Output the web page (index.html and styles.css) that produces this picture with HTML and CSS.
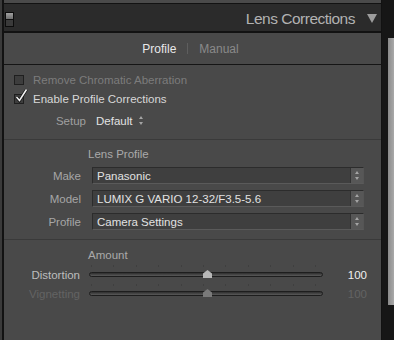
FILE: index.html
```html
<!DOCTYPE html>
<html lang="en">
<head>
  <meta charset="UTF-8">
  <meta name="viewport" content="width=device-width, initial-scale=1.0">
  <title>Lens Corrections</title>
  <link rel="stylesheet" href="styles.css">
</head>
<body>

<div class="screen">
  <div class="edge"></div>
  <div class="column">
    <div class="prev-panel"></div>

    <div class="panel-head">
      <div class="switch"><span></span></div>
      <div class="title">Lens Corrections</div>
      <div class="collapse"></div>
    </div>

    <div class="tabs">
      <span class="tab active">Profile</span>
      <span class="tab-sep"></span>
      <span class="tab">Manual</span>
    </div>

    <div class="section checks">
      <div class="check-row off">
        <span class="box"></span>
        <span>Remove Chromatic Aberration</span>
      </div>
      <div class="check-row">
        <span class="box">
          <!-- check mark sticks out of the box -->
          <svg width="13" height="15" viewBox="0 0 13 15"><path d="M1.5 9 L4.5 12.5 L11.5 1.5" fill="none" stroke="#111" stroke-width="3"/><path d="M1.5 9 L4.5 12.5 L11.5 1.5" fill="none" stroke="#f2f2f2" stroke-width="1.6"/></svg>
        </span>
        <span>Enable Profile Corrections</span>
      </div>
      <div class="setup-row">
        <span class="setup-label">Setup</span>
        <span class="setup-value">Default</span>
        <span class="updown small"></span>
      </div>
    </div>

    <div class="section lens">
      <div class="group-title">Lens Profile</div>
      <div class="field">
        <span class="field-label">Make</span>
        <div class="select"><span>Panasonic</span><b class="updown"></b></div>
      </div>
      <div class="field">
        <span class="field-label">Model</span>
        <div class="select"><span>LUMIX G VARIO 12-32/F3.5-5.6</span><b class="updown"></b></div>
      </div>
      <div class="field">
        <span class="field-label">Profile</span>
        <div class="select"><span>Camera Settings</span><b class="updown"></b></div>
      </div>
    </div>

    <div class="section amount">
      <div class="group-title">Amount</div>
      <div class="slider-row">
        <span class="slider-label">Distortion</span>
        <div class="slider"><div class="track"></div><div class="thumb"></div></div>
        <span class="slider-value">100</span>
      </div>
      <div class="slider-row disabled">
        <span class="slider-label">Vignetting</span>
        <div class="slider"><div class="track"></div><div class="thumb"></div></div>
        <span class="slider-value">100</span>
      </div>
    </div>
  </div>
  <div class="gutter">
    <div class="scroll-thumb"></div>
  </div>
</div>

</body>
</html>
```

FILE: styles.css
```css
body {
  margin: 0;
  background: #151515;
  font-family: 'Liberation Sans', Arial, sans-serif;
  font-size: 11.5px;
  overflow: hidden;
}
.screen {
  display: flex;
  width: 394px;
  height: 340px;
}
.edge {
  width: 2px;
  background: #3a3a3a;
}
.column {
  width: 377px;
  border-left: 2px solid #121212;
  border-right: 1px solid #121212;
  background: #494949;
  display: flex;
  flex-direction: column;
}
.prev-panel {
  height: 3px;
  background: #4a4a4a;
  border-bottom: 1px solid #121212;
}
.panel-head {
  height: 27px;
  background: #2b2b2b;
  border-bottom: 2px solid #121212;
  display: flex;
  align-items: center;
}
.switch {
  width: 7px;
  height: 13px;
  margin-left: 1px;
  border: 1px solid #0c0c0c;
  background: #3a3a3a;
  margin-top: 3px;
}
.switch span {
  display: block;
  height: 6px;
  background: linear-gradient(#a0a0a0, #6e6e6e);
  border-bottom: 1px solid #111;
}
.title {
  flex: 1;
  text-align: right;
  color: #b2b2b2;
  font-size: 15.5px;
  letter-spacing: -0.5px;
  padding-top: 2px;
}
.collapse {
  width: 0;
  height: 0;
  margin: 2px 4px 0 12px;
  border-left: 5px solid transparent;
  border-right: 5px solid transparent;
  border-top: 9px solid #9c9c9c;
}
.tabs {
  height: 31px;
  border-bottom: 1px solid #151515;
  display: flex;
  justify-content: center;
  align-items: center;
  gap: 11px;
  padding-right: 4px;
}
.tab {
  color: #8a8a8a;
  font-size: 12px;
}
.tab.active {
  color: #e8e8e8;
}
.tab-sep {
  width: 1px;
  height: 11px;
  background: #5e5e5e;
}
.section {
  border-bottom: 1px solid #3a3a3a;
}
.checks {
  padding: 5px 0 9px 10px;
}
.check-row {
  height: 19px;
  display: flex;
  align-items: center;
  gap: 9px;
  color: #d8d8d8;
}
.check-row.off {
  color: #7c7c7c;
}
.box {
  position: relative;
  width: 8px;
  height: 8px;
  border: 1px solid #1f1f1f;
  background: #3d3d3d;
}
.box svg {
  position: absolute;
  left: 0;
  top: -7px;
}
.setup-row {
  height: 19px;
  margin-top: 3px;
  display: flex;
  align-items: center;
}
.setup-label {
  width: 72px;
  text-align: right;
  color: #a0a0a0;
}
.setup-value {
  margin-left: 10px;
  color: #e2e2e2;
}
.updown {
  position: relative;
  width: 5px;
  height: 9px;
  margin-left: 7px;
}
.updown::before, .updown::after {
  content: '';
  position: absolute;
  left: 0;
  border-left: 2.5px solid transparent;
  border-right: 2.5px solid transparent;
}
.updown::before {
  top: 0;
  border-bottom: 3px solid #a4a4a4;
}
.updown::after {
  bottom: 0;
  border-top: 3px solid #a4a4a4;
}
.group-title {
  color: #a9a9a9;
  padding-left: 84px;
  height: 16px;
  line-height: 16px;
}
.lens {
  padding: 6px 0 9px;
}
.lens .group-title {
  margin-bottom: 5px;
}
.field {
  display: flex;
  align-items: center;
  margin-bottom: 6px;
}
.field:last-child {
  margin-bottom: 0;
}
.field-label {
  width: 77px;
  text-align: right;
  color: #a6a6a6;
  margin-right: 11px;
}
.select {
  width: 270px;
  height: 15px;
  border: 1px solid #2c2c2c;
  border-bottom-color: #5a5a5a;
  border-right-color: #555;
  background: #3f3f3f;
  display: flex;
  align-items: center;
  color: #e2e2e2;
}
.select span {
  flex: 1;
  padding-left: 4px;
}
.select .updown {
  width: 12px;
  height: 15px;
  margin: 0;
  background: #575757;
  border-left: 1px solid #333;
}
.select .updown::before, .select .updown::after {
  left: 3.5px;
}
.select .updown::before {
  top: 3px;
}
.select .updown::after {
  bottom: 3px;
}
.amount {
  padding-top: 7px;
  border-bottom: none;
}
.amount .group-title {
  margin-bottom: 2px;
}
.slider-row {
  height: 19px;
  display: flex;
  align-items: center;
  color: #bdbdbd;
}
.slider-label {
  width: 76px;
  text-align: right;
  margin-right: 9px;
}
.slider {
  position: relative;
  width: 234px;
  height: 19px;
  background: repeating-linear-gradient(90deg, #3f3f3f 0 1px, transparent 1px 22.4px) 2px 0 / 226px 2px no-repeat;
}
.track {
  position: absolute;
  left: 0;
  right: 0;
  top: 7px;
  height: 3px;
  border: 1px solid #1e1e1e;
  border-radius: 3px;
  background: linear-gradient(#2e2e2e, #5a5a5a);
}
.thumb {
  position: absolute;
  left: 114px;
  top: 5px;
  width: 9px;
  height: 8px;
  background: #b8b8b8;
  clip-path: polygon(50% 0, 100% 45%, 100% 100%, 0 100%, 0 45%);
}
.slider-value {
  width: 44px;
  text-align: right;
  color: #f0f0f0;
}
.slider-row.disabled {
  color: #636363;
}
.disabled .slider-value {
  color: #636363;
}
.disabled .thumb {
  background: #7a7a7a;
}
.gutter {
  flex: 1;
  display: flex;
  justify-content: flex-end;
  background: #161616;
}
.scroll-thumb {
  width: 6px;
  height: 267px;
  margin-top: 38px;
  background: linear-gradient(90deg, #8a8a8a, #a9a9a9);
}
```
